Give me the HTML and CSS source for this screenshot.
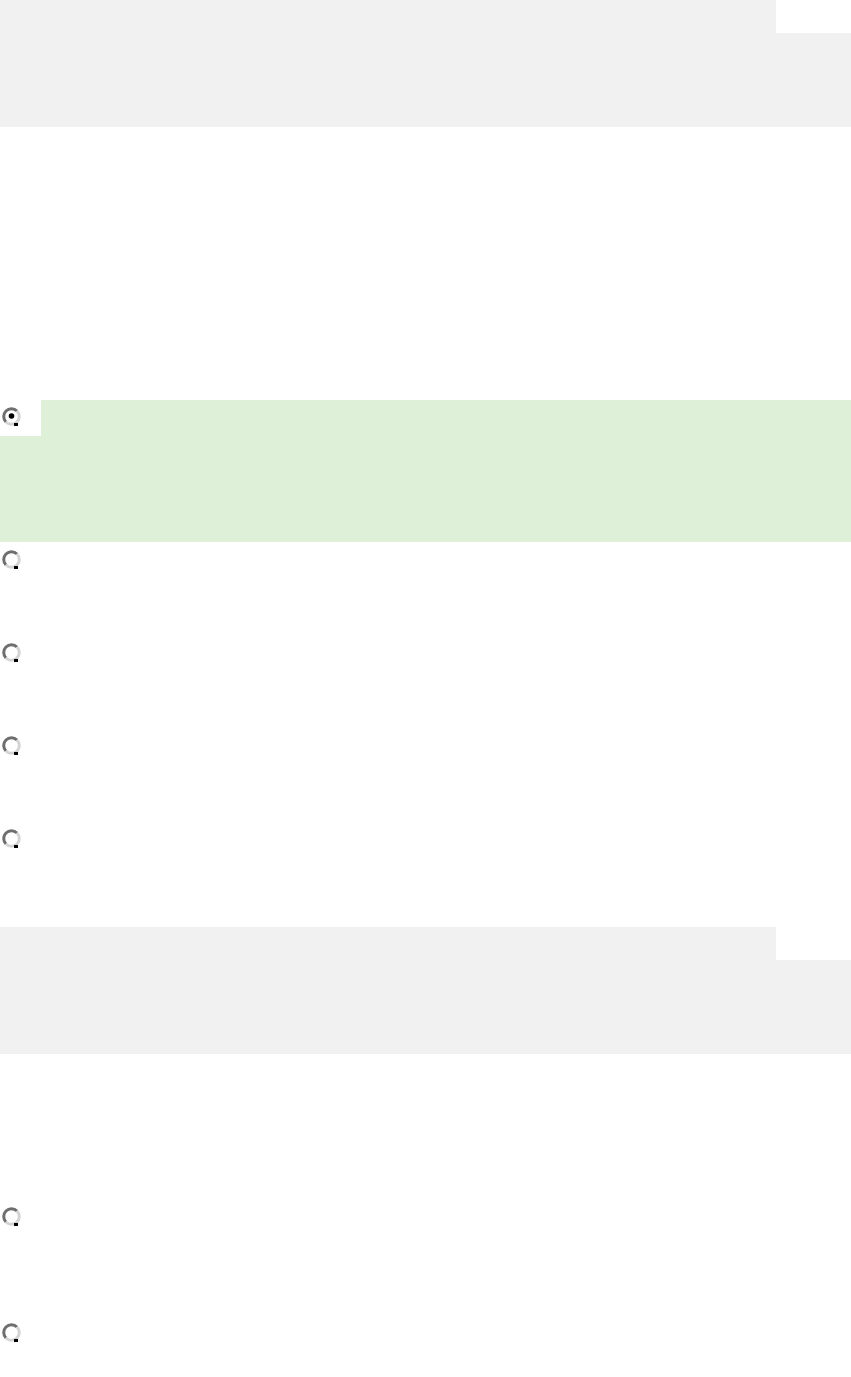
FILE: index.html
```html
<!DOCTYPE html>
<html lang="en">
<head>
<meta charset="utf-8">
<title>Quiz</title>
<link rel="stylesheet" href="styles.css">
</head>
<body>
<div class="quiz">
  <section class="question">
    <div class="q-header"><div class="q-flag"></div></div>
    <div class="q-body q-body-1"></div>
    <ul class="options">
      <li class="option correct">
        <div class="radio-cell">
          <svg class="radio" viewBox="0 0 20 20" width="20" height="20"><path d="M16 5 A7.5 7.5 0 0 0 5 16" fill="none" stroke="#6e6e6e" stroke-width="3"/><path d="M5 16 A7.5 7.5 0 0 0 16 5" fill="none" stroke="#d4d4d4" stroke-width="3"/><circle cx="10.5" cy="10.5" r="5.5" fill="#fff"/><circle cx="10.5" cy="10" r="2.8" fill="#000"/><rect x="13" y="17" width="4" height="3" fill="#000"/></svg>
        </div>
      </li>
      <li class="option"><div class="radio-cell plain"><svg class="radio" viewBox="0 0 20 20" width="20" height="20"><path d="M16 5 A7.5 7.5 0 0 0 5 16" fill="none" stroke="#6e6e6e" stroke-width="3"/><path d="M5 16 A7.5 7.5 0 0 0 16 5" fill="none" stroke="#d4d4d4" stroke-width="3"/><circle cx="10.5" cy="10.5" r="5.5" fill="#fff"/><rect x="13" y="17" width="4" height="3" fill="#000"/></svg></div></li>
      <li class="option"><div class="radio-cell plain"><svg class="radio" viewBox="0 0 20 20" width="20" height="20"><path d="M16 5 A7.5 7.5 0 0 0 5 16" fill="none" stroke="#6e6e6e" stroke-width="3"/><path d="M5 16 A7.5 7.5 0 0 0 16 5" fill="none" stroke="#d4d4d4" stroke-width="3"/><circle cx="10.5" cy="10.5" r="5.5" fill="#fff"/><rect x="13" y="17" width="4" height="3" fill="#000"/></svg></div></li>
      <li class="option"><div class="radio-cell plain"><svg class="radio" viewBox="0 0 20 20" width="20" height="20"><path d="M16 5 A7.5 7.5 0 0 0 5 16" fill="none" stroke="#6e6e6e" stroke-width="3"/><path d="M5 16 A7.5 7.5 0 0 0 16 5" fill="none" stroke="#d4d4d4" stroke-width="3"/><circle cx="10.5" cy="10.5" r="5.5" fill="#fff"/><rect x="13" y="17" width="4" height="3" fill="#000"/></svg></div></li>
      <li class="option last"><div class="radio-cell plain"><svg class="radio" viewBox="0 0 20 20" width="20" height="20"><path d="M16 5 A7.5 7.5 0 0 0 5 16" fill="none" stroke="#6e6e6e" stroke-width="3"/><path d="M5 16 A7.5 7.5 0 0 0 16 5" fill="none" stroke="#d4d4d4" stroke-width="3"/><circle cx="10.5" cy="10.5" r="5.5" fill="#fff"/><rect x="13" y="17" width="4" height="3" fill="#000"/></svg></div></li>
    </ul>
  </section>
  <section class="question">
    <div class="q-header"><div class="q-flag"></div></div>
    <div class="q-body q-body-2"></div>
    <ul class="options">
      <li class="option tall"><div class="radio-cell plain"><svg class="radio" viewBox="0 0 20 20" width="20" height="20"><path d="M16 5 A7.5 7.5 0 0 0 5 16" fill="none" stroke="#6e6e6e" stroke-width="3"/><path d="M5 16 A7.5 7.5 0 0 0 16 5" fill="none" stroke="#d4d4d4" stroke-width="3"/><circle cx="10.5" cy="10.5" r="5.5" fill="#fff"/><rect x="13" y="17" width="4" height="3" fill="#000"/></svg></div></li>
      <li class="option tall"><div class="radio-cell plain"><svg class="radio" viewBox="0 0 20 20" width="20" height="20"><path d="M16 5 A7.5 7.5 0 0 0 5 16" fill="none" stroke="#6e6e6e" stroke-width="3"/><path d="M5 16 A7.5 7.5 0 0 0 16 5" fill="none" stroke="#d4d4d4" stroke-width="3"/><circle cx="10.5" cy="10.5" r="5.5" fill="#fff"/><rect x="13" y="17" width="4" height="3" fill="#000"/></svg></div></li>
    </ul>
  </section>
</div>
</body>
</html>
```

FILE: styles.css
```css
html, body {
  margin: 0;
  padding: 0;
  background: #ffffff;
  font-family: "Liberation Sans", Arial, sans-serif;
}

.quiz {
  display: flex;
  flex-direction: column;
  width: 851px;
}

.question {
  display: flex;
  flex-direction: column;
}

.q-header {
  height: 127px;
  background: #f1f1f1;
  display: flex;
  justify-content: flex-end;
  align-items: flex-start;
}

.q-flag {
  width: 75px;
  height: 33px;
  background: #ffffff;
}

.q-body-1 {
  height: 273px;
}

.q-body-2 {
  height: 145px;
}

.options {
  list-style: none;
  margin: 0;
  padding: 0;
  display: flex;
  flex-direction: column;
}

.option {
  height: 93px;
  display: flex;
  align-items: flex-start;
}

.option.last {
  height: 106px;
}

.option.tall {
  height: 116px;
}

.option.correct {
  height: 142px;
  background: #dff0d8;
}

.radio-cell {
  width: 41px;
  height: 36px;
  background: #ffffff;
  display: flex;
  align-items: flex-start;
  padding: 6px 0 0 1px;
  box-sizing: border-box;
}

.radio-cell.plain {
  padding-top: 7px;
  background: transparent;
}

.radio {
  display: block;
}
```
